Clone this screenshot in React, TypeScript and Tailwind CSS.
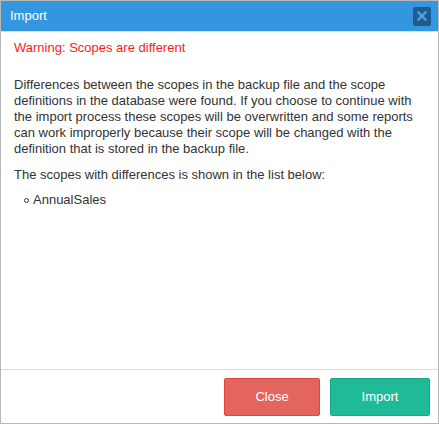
export default function App() {
  return (
    <div className="flex h-[424px] w-[439px] flex-col border border-[#b8b8b8] bg-white font-['Liberation_Sans',Arial,sans-serif] text-[13px] text-[#333]">
      {/* Title bar */}
      <div className="flex h-[31px] shrink-0 items-center justify-between border-b border-[#dcdcdc] bg-[#3596e0] pl-[9px] pr-[7px]">
        <span className="text-[13px] text-white">Import</span>
        <button className="flex h-[19px] w-[18px] items-center justify-center rounded-[2px] bg-[#215b8c]">
          <svg width="10" height="10" viewBox="0 0 10 10">
            <path d="M1.5 1.5 L8.5 8.5 M8.5 1.5 L1.5 8.5" stroke="#4aa3e8" strokeWidth="2.4" strokeLinecap="square" />
          </svg>
        </button>
      </div>

      {/* Body */}
      <div className="flex-1 px-[13px] pt-[8px] leading-[16px]">
        <p className="text-[#ff1a1a]">Warning: Scopes are different</p>
        <p className="mt-[21px]">
          Differences between the scopes in the backup file and the scope definitions in the database were
          found. If you choose to continue with the import process these scopes will be overwritten and some
          reports can work improperly because their scope will be changed with the definition that is stored in
          the backup file.
        </p>
        <p className="mt-[10px]">The scopes with differences is shown in the list below:</p>
        <ul className="mt-[9px] pl-[10px]">
          <li className="flex items-center gap-[4px]">
            <span className="inline-block h-[5px] w-[5px] rounded-full border border-[#333]" />
            <span>AnnualSales</span>
          </li>
        </ul>
      </div>

      {/* Footer */}
      <div className="flex h-[54px] shrink-0 items-center justify-end gap-[10px] border-t border-[#dcdcdc] pr-[8px]">
        <button className="h-[38px] w-[96px] rounded-[2px] border border-[#e0453d] bg-[#e4655f] text-[13px] text-white">
          Close
        </button>
        <button className="h-[38px] w-[100px] rounded-[2px] border border-[#17a686] bg-[#1fbb99] text-[13px] text-white">
          Import
        </button>
      </div>
    </div>
  );
}
